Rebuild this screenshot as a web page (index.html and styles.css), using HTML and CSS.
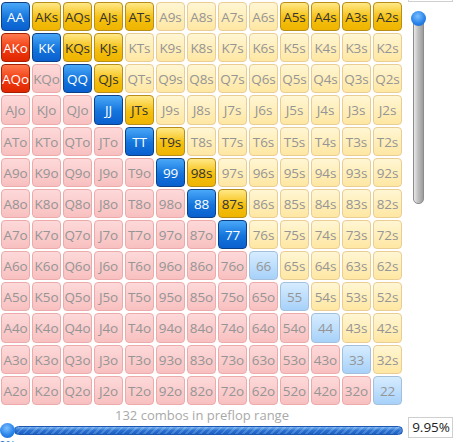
FILE: index.html
```html
<!DOCTYPE html>
<html>
<head>
<meta charset="utf-8">
<link rel="stylesheet" href="styles.css">
</head>
<body>
<div class="app">
  <div class="left">
    <div class="grid">
      <div class="c p on">AA</div><div class="c s on">AKs</div><div class="c s on">AQs</div><div class="c s on">AJs</div><div class="c s on">ATs</div><div class="c s">A9s</div><div class="c s">A8s</div><div class="c s">A7s</div><div class="c s">A6s</div><div class="c s on">A5s</div><div class="c s on">A4s</div><div class="c s on">A3s</div><div class="c s on">A2s</div>
      <div class="c o on">AKo</div><div class="c p on">KK</div><div class="c s on">KQs</div><div class="c s on">KJs</div><div class="c s">KTs</div><div class="c s">K9s</div><div class="c s">K8s</div><div class="c s">K7s</div><div class="c s">K6s</div><div class="c s">K5s</div><div class="c s">K4s</div><div class="c s">K3s</div><div class="c s">K2s</div>
      <div class="c o on">AQo</div><div class="c o">KQo</div><div class="c p on">QQ</div><div class="c s on">QJs</div><div class="c s">QTs</div><div class="c s">Q9s</div><div class="c s">Q8s</div><div class="c s">Q7s</div><div class="c s">Q6s</div><div class="c s">Q5s</div><div class="c s">Q4s</div><div class="c s">Q3s</div><div class="c s">Q2s</div>
      <div class="c o">AJo</div><div class="c o">KJo</div><div class="c o">QJo</div><div class="c p on">JJ</div><div class="c s on">JTs</div><div class="c s">J9s</div><div class="c s">J8s</div><div class="c s">J7s</div><div class="c s">J6s</div><div class="c s">J5s</div><div class="c s">J4s</div><div class="c s">J3s</div><div class="c s">J2s</div>
      <div class="c o">ATo</div><div class="c o">KTo</div><div class="c o">QTo</div><div class="c o">JTo</div><div class="c p on">TT</div><div class="c s on">T9s</div><div class="c s">T8s</div><div class="c s">T7s</div><div class="c s">T6s</div><div class="c s">T5s</div><div class="c s">T4s</div><div class="c s">T3s</div><div class="c s">T2s</div>
      <div class="c o">A9o</div><div class="c o">K9o</div><div class="c o">Q9o</div><div class="c o">J9o</div><div class="c o">T9o</div><div class="c p on">99</div><div class="c s on">98s</div><div class="c s">97s</div><div class="c s">96s</div><div class="c s">95s</div><div class="c s">94s</div><div class="c s">93s</div><div class="c s">92s</div>
      <div class="c o">A8o</div><div class="c o">K8o</div><div class="c o">Q8o</div><div class="c o">J8o</div><div class="c o">T8o</div><div class="c o">98o</div><div class="c p on">88</div><div class="c s on">87s</div><div class="c s">86s</div><div class="c s">85s</div><div class="c s">84s</div><div class="c s">83s</div><div class="c s">82s</div>
      <div class="c o">A7o</div><div class="c o">K7o</div><div class="c o">Q7o</div><div class="c o">J7o</div><div class="c o">T7o</div><div class="c o">97o</div><div class="c o">87o</div><div class="c p on">77</div><div class="c s">76s</div><div class="c s">75s</div><div class="c s">74s</div><div class="c s">73s</div><div class="c s">72s</div>
      <div class="c o">A6o</div><div class="c o">K6o</div><div class="c o">Q6o</div><div class="c o">J6o</div><div class="c o">T6o</div><div class="c o">96o</div><div class="c o">86o</div><div class="c o">76o</div><div class="c p">66</div><div class="c s">65s</div><div class="c s">64s</div><div class="c s">63s</div><div class="c s">62s</div>
      <div class="c o">A5o</div><div class="c o">K5o</div><div class="c o">Q5o</div><div class="c o">J5o</div><div class="c o">T5o</div><div class="c o">95o</div><div class="c o">85o</div><div class="c o">75o</div><div class="c o">65o</div><div class="c p">55</div><div class="c s">54s</div><div class="c s">53s</div><div class="c s">52s</div>
      <div class="c o">A4o</div><div class="c o">K4o</div><div class="c o">Q4o</div><div class="c o">J4o</div><div class="c o">T4o</div><div class="c o">94o</div><div class="c o">84o</div><div class="c o">74o</div><div class="c o">64o</div><div class="c o">54o</div><div class="c p">44</div><div class="c s">43s</div><div class="c s">42s</div>
      <div class="c o">A3o</div><div class="c o">K3o</div><div class="c o">Q3o</div><div class="c o">J3o</div><div class="c o">T3o</div><div class="c o">93o</div><div class="c o">83o</div><div class="c o">73o</div><div class="c o">63o</div><div class="c o">53o</div><div class="c o">43o</div><div class="c p">33</div><div class="c s">32s</div>
      <div class="c o">A2o</div><div class="c o">K2o</div><div class="c o">Q2o</div><div class="c o">J2o</div><div class="c o">T2o</div><div class="c o">92o</div><div class="c o">82o</div><div class="c o">72o</div><div class="c o">62o</div><div class="c o">52o</div><div class="c o">42o</div><div class="c o">32o</div><div class="c p">22</div>
    </div>
    <div class="caption">132 combos in preflop range</div>
    <div class="hslider">
      <div class="htrack"></div>
      <div class="hthumb"></div>
      <div class="hlabel">0%</div>
    </div>
  </div>
  <div class="right">
    <div class="topbox"></div>
    <div class="vslider">
      <div class="vtrack"></div>
      <div class="vthumb"></div>
    </div>
    <div class="pctbox">9.95%</div>
  </div>
</div>
</body>
</html>
```
FILE: styles.css
```css
html, body {
  margin: 0;
  padding: 0;
  background: #fff;
  overflow: hidden;
}
.app {
  display: flex;
  width: 457px;
  height: 442px;
  overflow: hidden;
  font-family: "Open Sans", "Noto Sans", sans-serif;
}
.left {
  width: 403px;
  padding-left: 1px;
  padding-top: 2px;
  box-sizing: border-box;
  display: flex;
  flex-direction: column;
}
.grid {
  display: grid;
  grid-template-columns: repeat(13, 29px);
  grid-auto-rows: 29.15px;
  column-gap: 2px;
  row-gap: 2px;
}
.c {
  box-sizing: border-box;
  border: 1px solid;
  border-radius: 4px;
  display: flex;
  align-items: center;
  justify-content: center;
  font-size: 13.5px;
  color: #959595;
  letter-spacing: -0.1px;
  padding-top: 1px;
  white-space: nowrap;
}
.s {
  background: linear-gradient(#fff6d3, #ffe7a3);
  border-color: #eacd92;
}
.o {
  background: linear-gradient(#fdd9d9, #f8c0c0);
  border-color: #edaaaa;
}
.p {
  background: linear-gradient(#d6ecff, #a7d1f9);
  border-color: #a3bfdb;
}
.s.on {
  background: linear-gradient(#ffe886, #f5c010 55%, #eeb400);
  border-color: #b88e18;
  color: #333;
}
.o.on {
  background: linear-gradient(#ff7a4e, #f03a10 55%, #e02800);
  border-color: #a52000;
  color: #fff;
}
.p.on {
  background: linear-gradient(#4aa8f8, #1474dc 55%, #0a60cf);
  border-color: #0c3f84;
  color: #fff;
}
.caption {
  margin-top: 2px;
  height: 16px;
  line-height: 16px;
  text-align: center;
  font-size: 13px;
  color: #a9a9a9;
}
.hslider {
  position: relative;
  height: 30px;
}
.htrack {
  margin-left: 13px;
  margin-top: 3px;
  height: 9px;
  box-sizing: border-box;
  border: 1px solid #1b58b4;
  border-radius: 5px;
  background:
    repeating-linear-gradient(135deg, rgba(255,255,255,0.18) 0 2px, rgba(255,255,255,0) 2px 5px),
    linear-gradient(#76b0ef, #2a72d2 50%, #1a5ec2);
}
.hthumb {
  position: absolute;
  left: -1px;
  top: 0;
  width: 15px;
  height: 15px;
  border-radius: 50%;
  background: radial-gradient(circle at 45% 35%, #7cc0ff, #2a84ea 55%, #1360c8);
}
.hlabel {
  position: absolute;
  left: -2px;
  top: 14px;
  font-size: 12px;
  color: #2a74d2;
}
.right {
  margin-left: 5px;
  width: 45px;
  display: flex;
  flex-direction: column;
}
.topbox {
  height: 22px;
  margin-top: -20px;
  box-sizing: border-box;
  border: 1px solid #cfcfcf;
  background: #fff;
}
.vslider {
  position: relative;
  height: 198px;
  margin-top: 9px;
}
.vtrack {
  margin-left: 5px;
  margin-top: 9px;
  width: 11px;
  height: 184px;
  box-sizing: border-box;
  border: 1px solid #8c8c8c;
  border-radius: 0 0 5px 5px;
  background: linear-gradient(90deg, #e8e8e8, #c4c4c4 40%, #9c9c9c);
}
.vthumb {
  position: absolute;
  left: 3px;
  top: 0;
  width: 15px;
  height: 15px;
  border-radius: 50%;
  background: radial-gradient(circle at 45% 35%, #7cc0ff, #2a84ea 55%, #1360c8);
}
.pctbox {
  margin-top: auto;
  margin-bottom: 4px;
  height: 21px;
  width: 45px;
  box-sizing: border-box;
  border: 1px solid #cfcfcf;
  background: #fff;
  font-size: 13.5px;
  line-height: 19px;
  text-align: right;
  padding-right: 2px;
  color: #222;
}
```
